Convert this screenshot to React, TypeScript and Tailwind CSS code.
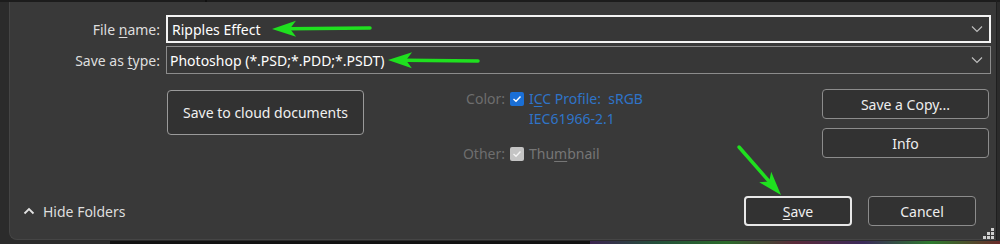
import React from 'react';

const font = { fontFamily: '"Noto Sans", "Open Sans", sans-serif' };

const Chevron = () => (
  <svg width="12" height="8" viewBox="0 0 12 8" className="text-[#bdbdbd]">
    <path d="M1 1.5 L6 6.5 L11 1.5" fill="none" stroke="currentColor" strokeWidth="1.2" />
  </svg>
);

const Check = ({ color }: { color: string }) => (
  <svg width="10" height="8" viewBox="0 0 10 8">
    <path d="M1.5 4 L4 6.3 L8.5 1.5" fill="none" stroke={color} strokeWidth="1.4" />
  </svg>
);

const Arrow = ({ x1, y1, x2, y2 }: { x1: number; y1: number; x2: number; y2: number }) => {
  // arrow tip at (x2, y2)
  const a = Math.atan2(y2 - y1, x2 - x1);
  const len = 24;
  const w = 8;
  const bx = x2 - len * Math.cos(a);
  const by = y2 - len * Math.sin(a);
  const px = -Math.sin(a) * w;
  const py = Math.cos(a) * w;
  const pts = `${x2},${y2} ${bx + px},${by + py} ${bx + 6 * Math.cos(a)},${by + 6 * Math.sin(a)} ${bx - px},${by - py}`;
  return (
    <g>
      <line x1={x1} y1={y1} x2={bx + 7 * Math.cos(a)} y2={by + 7 * Math.sin(a)} stroke="#1fe01f" strokeWidth="3.5" strokeLinecap="round" />
      <polygon points={pts} fill="#1fe01f" />
    </g>
  );
};

export default function App() {
  return (
    <div className="relative w-[1000px] h-[244px] bg-[#2b2b2b] overflow-hidden text-[14px]" style={font}>
      <div className="h-[2px] bg-[#1c1c1c] flex">
        <div className="w-[205px]" />
        <div className="w-[2px] bg-[#111]" />
      </div>

      <div className="ml-[9px] mr-[3px] h-[238px] bg-[#393939] rounded-bl-[8px] border-l border-b border-[#454545] pr-[6px] pt-[13px] flex flex-col">
        {/* File name */}
        <div className="flex items-center h-[28px]">
          <div className="w-[156px] text-right text-[#dedede] pr-[6px]">
            File <span className="underline underline-offset-2">n</span>ame:
          </div>
          <div className="flex-1 h-full border-2 border-[#f4f4f4] bg-[#373737] flex items-center justify-between pl-[4px] pr-[6px] text-white">
            <span>Ripples Effect</span>
            <Chevron />
          </div>
        </div>

        {/* Save as type */}
        <div className="flex items-center h-[28px] mt-[3px]">
          <div className="w-[156px] text-right text-[#dedede] pr-[6px]">
            Save as <span className="underline underline-offset-2">t</span>ype:
          </div>
          <div className="flex-1 h-full border border-[#8c8c8c] bg-[#373737] flex items-center justify-between pl-[3px] pr-[7px] text-white">
            <span>Photoshop (*.PSD;*.PDD;*.PSDT)</span>
            <Chevron />
          </div>
        </div>

        {/* Options */}
        <div className="flex mt-[15px] h-[70px]">
          <div className="w-[157px]" />
          <div className="w-[197px] h-[45px] mt-[1px] border border-[#9a9a9a] rounded-[4px] bg-[#323232] flex items-center justify-center text-[#f0f0f0]">
            Save to cloud documents
          </div>

          <div className="ml-[96px] w-[214px] flex flex-col">
            <div className="flex items-start">
              <span className="w-[46px] text-right text-[#6e6e6e] pr-[1px] leading-[20px]">Color:</span>
              <span className="ml-[4px] mt-[3px] w-[14px] h-[14px] rounded-[2px] bg-[#1a6fd6] flex items-center justify-center">
                <Check color="#ffffff" />
              </span>
              <span className="ml-[5px] text-[#2f74c8] leading-[20px]">
                I<span className="underline underline-offset-2">C</span>C Profile:&nbsp; sRGB
                <br />
                IEC61966-2.1
              </span>
            </div>
            <div className="ml-[14px] mt-[7px] h-px w-[200px] bg-[#bdbdbd]" />
            <div className="flex items-center mt-[7px]">
              <span className="w-[46px] text-right text-[#6e6e6e] pr-[1px]">Other:</span>
              <span className="ml-[4px] w-[14px] h-[14px] rounded-[2px] bg-[#c4c4c4] flex items-center justify-center">
                <Check color="#f2f2f2" />
              </span>
              <span className="ml-[5px] text-[#767676]">
                Thu<span className="underline underline-offset-2">m</span>bnail
              </span>
            </div>
          </div>

          <div className="ml-auto mr-[2px] w-[167px] flex flex-col gap-[9px]">
            <div className="h-[30px] border border-[#8c8c8c] rounded-[4px] bg-[#323232] flex items-center justify-center text-[#eeeeee]">
              Save a Copy...
            </div>
            <div className="h-[30px] border border-[#8c8c8c] rounded-[4px] bg-[#323232] flex items-center justify-center text-[#eeeeee]">
              Info
            </div>
          </div>
        </div>

        {/* Bottom row */}
        <div className="flex items-center mt-auto mb-[13px] h-[30px]">
          <div className="ml-[13px] flex items-center text-[#dedede]">
            <svg width="12" height="8" viewBox="0 0 12 8">
              <path d="M1.5 6.5 L6 2 L10.5 6.5" fill="none" stroke="#e2e2e2" strokeWidth="1.8" />
            </svg>
            <span className="ml-[8px]">Hide Folders</span>
          </div>
          <div className="ml-auto flex gap-[16px] mr-[15px]">
            <div className="w-[108px] h-[30px] border-2 border-[#e8e8e8] rounded-[4px] bg-[#323232] flex items-center justify-center text-[#f0f0f0]">
              <span><span className="underline underline-offset-2">S</span>ave</span>
            </div>
            <div className="w-[108px] h-[30px] border border-[#8c8c8c] rounded-[4px] bg-[#323232] flex items-center justify-center text-[#eeeeee]">
              Cancel
            </div>
          </div>
        </div>
      </div>

      {/* right edge */}
      <div className="absolute top-0 right-[3px] w-px h-[240px] bg-[#1f1f1f]" />

      {/* bottom strip */}
      <div className="absolute left-[110px] right-0 bottom-0 h-[3px] bg-[#121212]" />
      <div className="absolute left-[590px] right-0 bottom-0 h-[3px] bg-[linear-gradient(90deg,#3b2450,#24503a,#2b6b2b,#5a2a3a,#3b2a5a,#2d7a2d,#6a2a2a)]" />

      {/* resize grip */}
      <div className="absolute right-[6px] bottom-[5px] grid grid-cols-3 gap-[1px] w-[11px]">
        <span /><span /><span className="w-[3px] h-[3px] bg-[#d0d0d0]" />
        <span /><span className="w-[3px] h-[3px] bg-[#d0d0d0]" /><span className="w-[3px] h-[3px] bg-[#d0d0d0]" />
        <span className="w-[3px] h-[3px] bg-[#d0d0d0]" /><span className="w-[3px] h-[3px] bg-[#d0d0d0]" /><span className="w-[3px] h-[3px] bg-[#d0d0d0]" />
      </div>

      {/* annotation arrows */}
      <svg className="absolute inset-0 pointer-events-none" width="1000" height="244">
        <Arrow x1={370} y1={28} x2={272} y2={29} />
        <Arrow x1={478} y1={61} x2={388} y2={60} />
        <Arrow x1={739} y1={147} x2={781} y2={195} />
      </svg>
    </div>
  );
}
